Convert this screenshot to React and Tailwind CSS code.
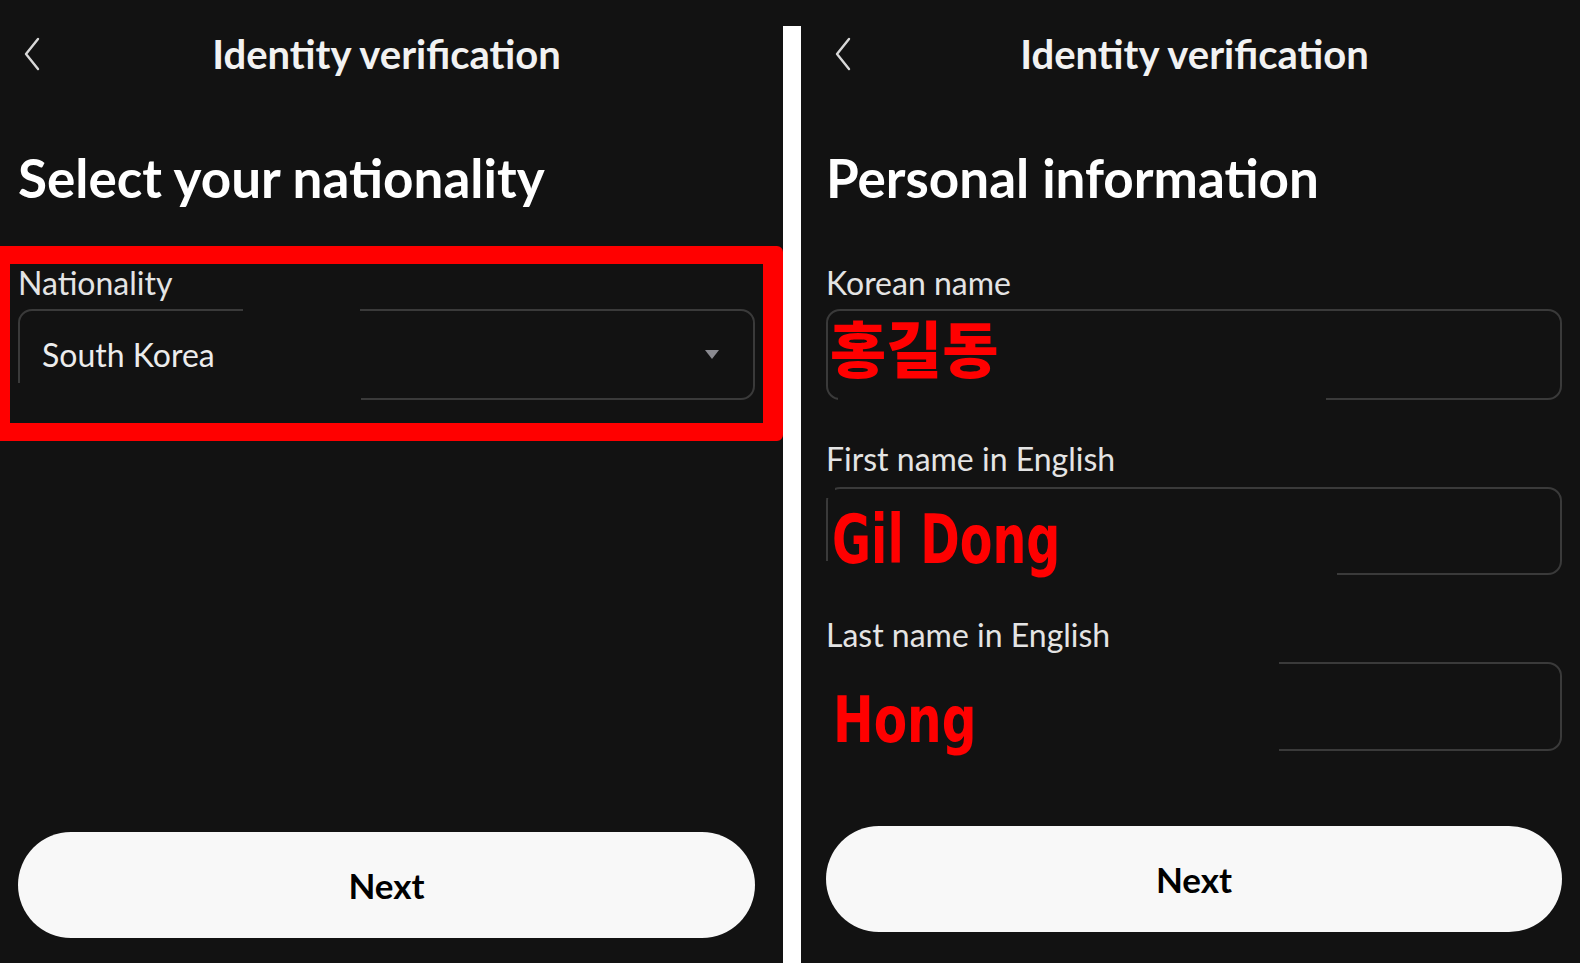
import React from "react";

const ui = { fontFamily: "Lato, 'Noto Sans', sans-serif" };
const stamp = { fontFamily: "'DejaVu Sans', 'Noto Sans CJK KR', sans-serif" };

function BackIcon() {
  return (
    <svg width="20" height="36" viewBox="0 0 20 36" fill="none">
      <path d="M16 3 L4 18 L16 33" stroke="#d8d8d8" strokeWidth="2.4" strokeLinecap="round" strokeLinejoin="round" />
    </svg>
  );
}

function Header({ back, pad }) {
  return (
    <div className={`relative flex h-[108px] items-center justify-center ${pad}`}>
      <div className={`absolute top-[36px] ${back}`}>
        <BackIcon />
      </div>
      <span className="text-[40px] font-bold text-[#f2f2f2]">Identity verification</span>
    </div>
  );
}

// covers for the places where the field outline was wiped out in the capture
function Gap({ className }) {
  return <div className={`absolute bg-[#121212] ${className}`} />;
}

function Label({ children, className = "" }) {
  return <div className={`text-[32px] leading-[38px] text-[#e4e4e4] ${className}`}>{children}</div>;
}

function NextButton() {
  return (
    <button className="flex h-[106px] w-full items-center justify-center rounded-full bg-[#f8f8f8] text-[35px] font-bold text-black">
      Next
    </button>
  );
}

export default function App() {
  return (
    <div className="flex h-[963px] w-[1580px] bg-[#121212]" style={ui}>
      {/* left screen */}
      <div className="flex w-[783px] flex-col">
        <Header back="left-[22px]" pad="pr-[10px]" />
        <div className="px-[18px] pt-[38px] text-[53px] font-bold leading-[64px] text-white">Select your nationality</div>

        <div className="mt-[36px] rounded-r-[6px] border-y-[18px] border-l-[10px] border-r-[20px] border-[#ff0000] pl-[8px]">
          <Label>Nationality</Label>
          <div className="relative mt-[7px] mr-[8px] flex h-[91px] items-center justify-between rounded-[14px] border-2 border-[#3a3a3a] pl-[22px] pr-[34px]">
            <span className="text-[32px] text-[#ececec]">South Korea</span>
            <svg width="14" height="9" viewBox="0 0 14 9">
              <path d="M0 0 L14 0 L7 9 Z" fill="#8a8a90" />
            </svg>
            <Gap className="left-[223px] top-[-3px] h-[6px] w-[117px]" />
            <Gap className="left-[-3px] top-[72px] h-[22px] w-[344px]" />
          </div>
          <div className="h-[23px]" />
        </div>

        <div className="mt-auto pl-[18px] pr-[28px] pb-[25px]">
          <NextButton />
        </div>
      </div>

      {/* divider */}
      <div className="mt-[26px] w-[18px] bg-white" />

      {/* right screen */}
      <div className="flex flex-1 flex-col">
        <Header back="left-[32px]" pad="pl-[8px]" />
        <div className="px-[25px] pt-[38px] text-[53px] font-bold leading-[64px] text-white">Personal information</div>

        <div className="mt-[54px] flex flex-col pl-[25px] pr-[18px]">
          <Label>Korean name</Label>
          <div className="relative mt-[7px] flex h-[91px] items-center rounded-[14px] border-2 border-[#3a3a3a] pb-[16px] pl-[2px]">
            <span className="relative z-10 text-[61px] font-black leading-none text-[#ff0000]" style={{ fontFamily: "'Noto Sans CJK KR', sans-serif" }}>
              홍길동
            </span>
            <Gap className="left-[10px] top-[80px] h-[12px] w-[488px]" />
          </div>

          <Label className="mt-[40px]">First name in English</Label>
          <div className="relative mt-[9px] flex h-[88px] items-center rounded-[14px] border-2 border-[#3a3a3a] pl-[4px] pt-[18px]">
            <span className="relative z-10 inline-block origin-left scale-x-[0.7] text-[68px] font-bold leading-none text-[#ff0000]" style={stamp}>
              Gil Dong
            </span>
            <Gap className="left-[-3px] top-[-3px] h-[12px] w-[10px]" />
            <Gap className="left-[-3px] top-[72px] h-[20px] w-[512px]" />
          </div>

          <Label className="mt-[41px]">Last name in English</Label>
          <div className="relative mt-[8px] flex h-[89px] items-center rounded-[14px] border-2 border-[#3a3a3a] pl-[5px] pt-[26px]">
            <span className="relative z-10 inline-block origin-left scale-x-[0.76] text-[64px] font-bold leading-none text-[#ff0000]" style={stamp}>
              Hong
            </span>
            <Gap className="left-[-3px] top-[-3px] h-[95px] w-[454px]" />
          </div>
        </div>

        <div className="mt-auto pl-[25px] pr-[18px] pb-[31px]">
          <NextButton />
        </div>
      </div>
    </div>
  );
}
